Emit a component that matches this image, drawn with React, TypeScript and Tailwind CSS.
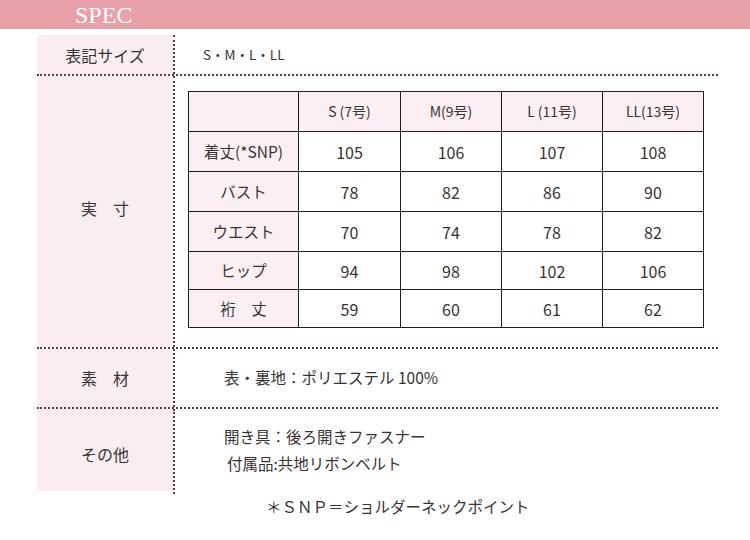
import React from "react";

const sizes = ["S\u2009(7号)", "M(9号)", "L\u2009(11号)", "LL(13号)"];
const rows: { label: string; vals: string[]; h: string }[] = [
  { label: "着丈(*SNP)", vals: ["105", "106", "107", "108"], h: "h-[40px]" },
  { label: "バスト", vals: ["78", "82", "86", "90"], h: "h-[40px]" },
  { label: "ウエスト", vals: ["70", "74", "78", "82"], h: "h-[40px]" },
  { label: "ヒップ", vals: ["94", "98", "102", "106"], h: "h-[38px]" },
  { label: "裄　丈", vals: ["59", "60", "61", "62"], h: "h-[38px]" },
];

export default function App() {
  return (
    <div
      className="w-[750px] h-[540px] bg-white text-[#3a3232] overflow-hidden"
      style={{ fontFamily: '"Noto Sans CJK JP", "Noto Sans", sans-serif' }}
    >
      <div className="h-[29px] bg-[#e8a1a9] flex items-center pl-[75px]">
        <span
          className="text-white text-[24px] leading-none pt-[1px]"
          style={{ fontFamily: '"Liberation Serif", serif' }}
        >
          SPEC
        </span>
      </div>

      <div className="ml-[37px] mt-[6px] w-[681px]">
        {/* Row 1 */}
        <div className="flex border-b-2 border-dotted border-[#5a3a3e]">
          <div className="w-[136px] h-[39px] bg-[#f9edf1] flex items-center justify-center text-[16px]">
            表記サイズ
          </div>
          <div className="flex-1 border-l-2 border-dotted border-[#5a3a3e] flex items-center pl-[28px] text-[13.5px]">
            S・M・L・LL
          </div>
        </div>

        {/* Row 2 */}
        <div className="flex border-b-2 border-dotted border-[#5a3a3e]">
          <div className="w-[136px] bg-[#f9edf1] flex items-center justify-center text-[16px] pb-[8px]">
            実　寸
          </div>
          <div className="flex-1 border-l-2 border-dotted border-[#5a3a3e] pl-[13px] pt-[15px] pb-[19px]">
            <table className="border-collapse table-fixed w-[515px] text-[16px]">
              <colgroup>
                <col className="w-[110px]" />
                <col className="w-[102px]" />
                <col className="w-[101px]" />
                <col className="w-[101px]" />
                <col className="w-[101px]" />
              </colgroup>
              <thead>
                <tr className="h-[40px] bg-[#fbeff3]">
                  <th className="border border-[#1e1e1e] font-normal"></th>
                  {sizes.map((s) => (
                    <th key={s} className="border border-[#1e1e1e] font-normal text-[14px] text-center">
                      {s}
                    </th>
                  ))}
                </tr>
              </thead>
              <tbody>
                {rows.map((r) => (
                  <tr key={r.label} className={r.h}>
                    <td className="border border-[#1e1e1e] bg-[#fbeff3] text-center text-[15.5px]">{r.label}</td>
                    {r.vals.map((v, i) => (
                      <td key={i} className="border border-[#1e1e1e] bg-white text-center text-[16px]">
                        {v}
                      </td>
                    ))}
                  </tr>
                ))}
              </tbody>
            </table>
          </div>
        </div>

        {/* Row 3 */}
        <div className="flex border-b-2 border-dotted border-[#5a3a3e]">
          <div className="w-[136px] h-[58px] bg-[#f9edf1] flex items-center justify-center text-[16px]">
            素　材
          </div>
          <div className="flex-1 border-l-2 border-dotted border-[#5a3a3e] flex items-center pl-[49px] text-[15.5px]">
            表・裏地：ポリエステル 100%
          </div>
        </div>

        {/* Row 4 */}
        <div className="flex items-start">
          <div className="w-[136px] h-[82px] bg-[#f9edf1] flex items-center justify-center text-[16px] pt-[8px]">
            その他
          </div>
          <div className="flex-1 h-[85px] border-l-2 border-dotted border-[#5a3a3e] pl-[49px] pt-[16px] text-[15.5px] flex flex-col gap-[5px]">
            <div className="leading-[22px]">開き具：後ろ開きファスナー</div>
            <div className="leading-[22px] pl-[3px]">付属品:共地リボンベルト</div>
          </div>
        </div>
      </div>

      <div className="ml-[266px] mt-[1px] text-[15.5px] leading-[22px]">
        ＊ＳＮＰ＝ショルダーネックポイント
      </div>
    </div>
  );
}
